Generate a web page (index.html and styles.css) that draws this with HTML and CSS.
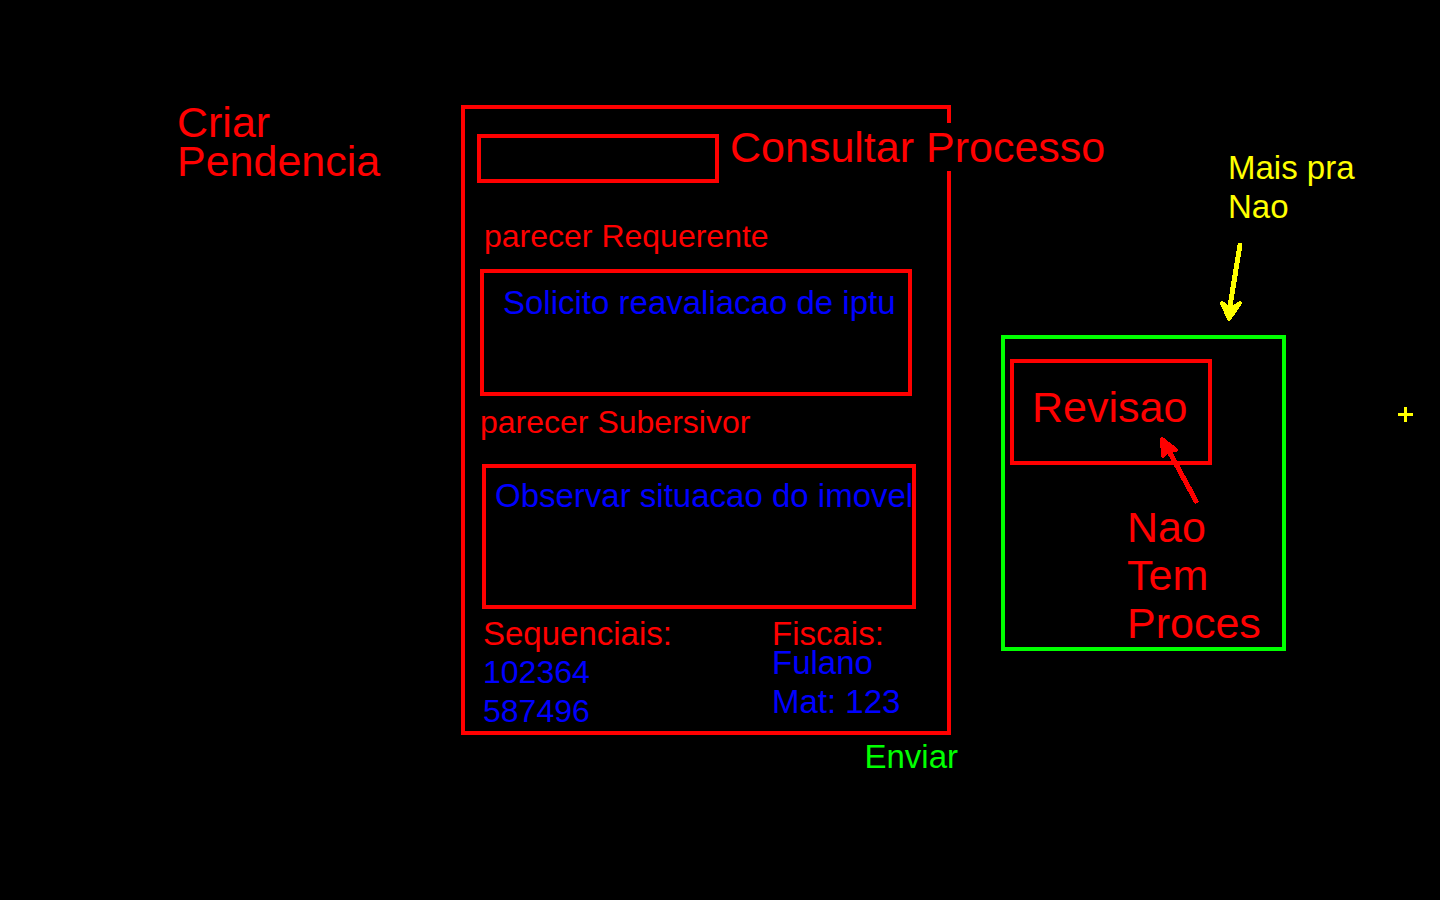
FILE: index.html
```html
<!DOCTYPE html>
<html lang="pt-BR">
<head>
<meta charset="utf-8">
<meta name="viewport" content="width=device-width, initial-scale=1">
<title>Criar Pendencia</title>
<link rel="stylesheet" href="styles.css">
</head>
<body>
<main class="board">
  <h1 class="title">Criar<br>Pendencia</h1>

  <section class="sheet">
    <form class="panel" id="pendencia">
      <div class="search">
        <input class="search-box" id="processo" type="text">
        <label class="search-label" for="processo">Consultar Processo</label>
      </div>
      <div class="field field-requerente">
        <label for="requerente">parecer Requerente</label>
        <textarea id="requerente" wrap="off">Solicito reavaliacao de iptu</textarea>
      </div>
      <div class="field field-subersivor">
        <label for="subersivor">parecer Subersivor</label>
        <textarea id="subersivor" wrap="off">Observar situacao do imovel</textarea>
      </div>
      <div class="lists">
        <div class="list">
          <h2>Sequenciais:</h2>
          <ul class="numbers"><li>102364</li><li>587496</li></ul>
        </div>
        <div class="list list-fiscais">
          <h2>Fiscais:</h2>
          <ul><li>Fulano</li><li>Mat: 123</li></ul>
        </div>
      </div>
    </form>
    <button class="send" type="submit" form="pendencia">Enviar</button>
  </section>

  <aside class="side">
    <p class="note">Mais pra<br>Nao</p>
    <svg class="note-arrow" width="24" height="82" viewBox="0 0 24 82" aria-hidden="true">
      <path d="M21 3 L11 64" fill="none" stroke="currentColor" stroke-width="5" stroke-linecap="round"/>
      <path d="M3 61 L10 77 L21 61 L15 65 L8 65 Z" fill="currentColor" stroke="currentColor" stroke-width="4" stroke-linejoin="round"/>
    </svg>
    <div class="review">
      <button class="review-button" type="button">Revisao</button>
      <p class="review-note">Nao<br>Tem<br>Proces</p>
      <svg class="review-arrow" width="42" height="72" viewBox="0 0 42 72" aria-hidden="true">
        <path d="M38 66 L12 18" fill="none" stroke="currentColor" stroke-width="5" stroke-linecap="round"/>
        <path d="M4 4 L5 21 L10 15 L18 15 Z" fill="currentColor" stroke="currentColor" stroke-width="4" stroke-linejoin="round"/>
      </svg>
    </div>
  </aside>

  <svg class="cross" width="15" height="15" viewBox="0 0 15 15" aria-hidden="true">
    <path d="M6 0h3v6h6v3H9v6H6V9H0V6h6z" fill="currentColor"/>
  </svg>
</main>
</body>
</html>
```

FILE: styles.css
```css
:root {
  --red: #ff0000;
  --blue: #0000ff;
  --green: #00ff00;
  --yellow: #ffff00;
}

* {
  box-sizing: border-box;
  margin: 0;
  padding: 0;
}

body {
  background: #000;
  color: var(--red);
  font: 33px/39px "Liberation Sans", Arial, sans-serif;
}

input,
textarea,
button {
  border: 4px solid var(--red);
  border-radius: 0;
  background: transparent;
  color: inherit;
  font: inherit;
}

svg {
  display: block;
  shape-rendering: crispEdges;
}

.board {
  position: relative;
  display: grid;
  grid-template-columns: minmax(0, 461fr) minmax(0, 490fr) minmax(0, 489fr);
  min-height: 100vh;
}

.title {
  padding: 103px 0 0 177px;
  font-size: 43px;
  font-weight: normal;
}

.sheet {
  display: flex;
  flex-direction: column;
  padding-top: 105px;
}

.panel {
  border: 4px solid var(--red);
  padding-top: 14px;
}

.search {
  display: flex;
  gap: 11px;
  padding-left: 12px;
}

.search-box {
  flex: none;
  width: 242px;
  height: 49px;
  margin-top: 11px;
  padding: 0 8px;
}

.search-label {
  flex: none;
  align-self: flex-start;
  position: relative;
  z-index: 1;
  background: #000;
  font-size: 43px;
  line-height: 48px;
  white-space: nowrap;
}

.field {
  display: flex;
  flex-direction: column;
}

.field label {
  font-size: 32px;
}

.field textarea {
  resize: none;
  overflow: hidden;
  color: var(--blue);
}

.field-requerente {
  gap: 13px;
  padding: 34px 35px 0 15px;
}

.field-requerente label {
  padding-left: 4px;
}

.field-requerente textarea {
  height: 127px;
  padding: 10px 0 0 19px;
}

.field-subersivor {
  gap: 22px;
  padding: 7px 31px 0 15px;
}

.field-subersivor textarea {
  height: 145px;
  margin-left: 2px;
  padding: 8px 0 0 9px;
}

.lists {
  display: grid;
  grid-template-columns: 289fr 175fr;
  padding: 5px 0 0 18px;
}

.list h2 {
  font-size: 33px;
  font-weight: normal;
}

.list ul {
  list-style: none;
  color: var(--blue);
}

.numbers {
  font-size: 32px;
}

.list-fiscais ul {
  margin-top: -10px;
}

.send {
  align-self: flex-end;
  margin: 2px -7px 0 0;
  border: 0;
  color: var(--green);
}

.side {
  padding: 148px 154px 0 50px;
}

.note {
  margin-left: 227px;
  color: var(--yellow);
  white-space: nowrap;
}

.note-arrow {
  margin: 16px 0 11px 218px;
  color: var(--yellow);
}

.review {
  position: relative;
  border: 4px solid var(--green);
  padding: 20px 0 0 5px;
  font-size: 43px;
  line-height: 48px;
}

.review-button {
  display: block;
  width: 202px;
  height: 106px;
  padding: 0 0 10px 18px;
  text-align: left;
}

.review-note {
  padding: 38px 0 0 117px;
}

.review-arrow {
  position: absolute;
  top: 96px;
  left: 153px;
}

.cross {
  position: absolute;
  top: 407px;
  right: 27px;
  color: var(--yellow);
}
```
